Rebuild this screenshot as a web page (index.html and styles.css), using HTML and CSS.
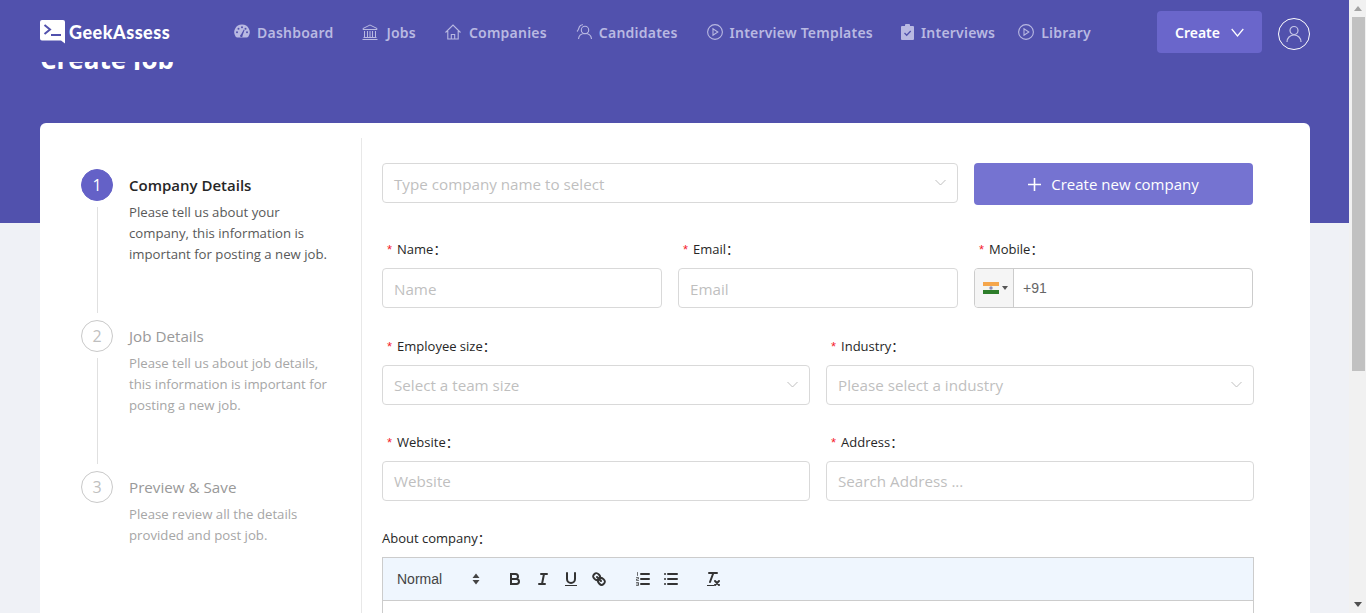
FILE: index.html
```html
<!DOCTYPE html>
<html lang="en">
<head>
    <meta charset="UTF-8">
    <meta name="viewport" content="width=device-width, initial-scale=1.0">
    <title>Create Job - GeekAssess</title>
    <link rel="stylesheet" href="styles.css">
</head>
<body>
    <div class="window">
        <div class="page">
            <header class="topbar">
                <a class="logo">
                    <svg class="logo-mark" width="25" height="24" viewBox="0 0 25 24">
                        <path d="M2 0h21a2 2 0 0 1 2 2v21.500l-4-3H2a2 2 0 0 1-2-2V2a2 2 0 0 1 2-2z" fill="#fff"/>
                        <path d="M4.500 5l5.500 4.500-5.500 4.500" fill="none" stroke="#5151ad" stroke-width="2"/>
                        <path d="M11 15h10" stroke="#5151ad" stroke-width="2"/>
                    </svg>
                    <span class="logo-text">GeekAssess</span>
                </a>
                <nav class="nav">
                    <a class="nav-item">
                        <svg width="16" height="16" viewBox="0 0 16 16"><path d="M8 .5a7.700 7.700 0 0 0-6.300 12.200c.4.600.9.800 1.500.8h9.600c.6 0 1.100-.2 1.500-.8A7.700 7.700 0 0 0 8 .5z" fill="#b9b9e2"/><g fill="#5151ad"><circle cx="8" cy="3.200" r="1"/><circle cx="4.500" cy="4.700" r="1"/><circle cx="11.500" cy="4.700" r="1"/><circle cx="3" cy="8.200" r="1"/><circle cx="13" cy="8.200" r="1"/><path d="M7 10.500l2.800-5 .8.400-2 5.300a1.300 1.300 0 1 1-1.600-.7z"/></g></svg>
                        Dashboard
                    </a>
                    <a class="nav-item nav-item-wide">
                        <svg width="16" height="16" viewBox="0 0 16 16" fill="none" stroke="#b9b9e2" stroke-width="1"><path d="M8 1L1 4.500v1h14v-1zM2.500 7v6M5.500 7v6M8 7v6M10.500 7v6M13.500 7v6M1.500 13.500h13M.5 15.500h15"/></svg>
                        Jobs
                    </a>
                    <a class="nav-item nav-item-wide">
                        <svg width="16" height="16" viewBox="0 0 16 16" fill="none" stroke="#b9b9e2" stroke-width="1.100"><path d="M.5 8.500L8 1l7.500 7.500M2.800 7v8h10.400V7M6.300 15v-4.500h3.400V15"/></svg>
                        Companies
                    </a>
                    <a class="nav-item">
                        <svg width="16" height="16" viewBox="0 0 16 16" fill="none" stroke="#b9b9e2" stroke-width="1.100"><circle cx="9" cy="6" r="3.700"/><path d="M2.500 15c.3-3.500 3-5.500 6.500-5.500s6.200 2 6.500 5.500M1 7.500C2.500 6 2.800 4.500 3.300 3 3.800 1.500 5 .7 7 .8"/></svg>
                        Candidates
                    </a>
                    <a class="nav-item">
                        <svg width="16" height="16" viewBox="0 0 16 16" fill="none" stroke="#b9b9e2" stroke-width="1.100"><circle cx="8" cy="8" r="7.400"/><path d="M6 4.800v6.400L10.800 8z"/></svg>
                        Interview Templates
                    </a>
                    <a class="nav-item nav-item-small">
                        <svg width="13" height="16" viewBox="0 0 13 16"><path d="M1 2h3V1a1 1 0 0 1 1-1h3a1 1 0 0 1 1 1v1h3a1 1 0 0 1 1 1v12a1 1 0 0 1-1 1H1a1 1 0 0 1-1-1V3a1 1 0 0 1 1-1z" fill="#b9b9e2"/><path d="M3.500 9l2.200 2.200 4-4.200" fill="none" stroke="#5151ad" stroke-width="1.300"/></svg>
                        Interviews
                    </a>
                    <a class="nav-item nav-item-last">
                        <svg width="16" height="16" viewBox="0 0 16 16" fill="none" stroke="#b9b9e2" stroke-width="1.100"><circle cx="8" cy="8" r="7.400"/><path d="M6 4.800v6.400L10.800 8z"/></svg>
                        Library
                    </a>
                </nav>
                <button class="create-btn">
                    Create
                    <svg width="13" height="9" viewBox="0 0 13 9" fill="none" stroke="#fff" stroke-width="1.200"><path d="M.7 1l5.800 7 5.800-7"/></svg>
                </button>
                <span class="avatar">
                    <svg width="18" height="18" viewBox="0 0 18 18" fill="none" stroke="#c6c6e8" stroke-width="1.200"><circle cx="9" cy="5.500" r="4"/><path d="M2 17c0-4 3-7 7-7s7 3 7 7"/></svg>
                </span>
            </header>

            <div class="title-clip"><h1 class="page-title">Create Job</h1></div>

            <main class="card">
                <aside class="steps">
                    <div class="step step-active">
                        <span class="step-num">1</span>
                        <div class="step-body">
                            <h3>Company Details</h3>
                            <p>Please tell us about your company, this information is important for posting a new job.</p>
                        </div>
                    </div>
                    <div class="step">
                        <span class="step-num">2</span>
                        <div class="step-body">
                            <h3>Job Details</h3>
                            <p>Please tell us about job details, this information is important for posting a new job.</p>
                        </div>
                    </div>
                    <div class="step step-last">
                        <span class="step-num">3</span>
                        <div class="step-body">
                            <h3>Preview &amp; Save</h3>
                            <p>Please review all the details provided and post job.</p>
                        </div>
                    </div>
                </aside>

                <form class="form">
                    <div class="row row-search">
                        <div class="select select-wide">
                            <span>Type company name to select</span>
                            <svg class="chevron" width="11" height="7" viewBox="0 0 11 7"><path d="M.5 1l5 5 5-5"/></svg>
                        </div>
                        <button type="button" class="new-company">
                            <svg width="13" height="13" viewBox="0 0 13 13"><path d="M6.500 0v13M0 6.500h13" stroke="#fff" stroke-width="1.600"/></svg>
                            Create new company
                        </button>
                    </div>

                    <div class="row row-three">
                        <div class="field">
                            <label class="req">Name：</label>
                            <div class="input">Name</div>
                        </div>
                        <div class="field">
                            <label class="req">Email：</label>
                            <div class="input">Email</div>
                        </div>
                        <div class="field">
                            <label class="req">Mobile：</label>
                            <div class="phone">
                                <span class="flag-box">
                                    <svg width="16" height="12" viewBox="0 0 16 12"><rect width="16" height="4" fill="#f5a64a"/><rect y="4" width="16" height="4" fill="#f4f4ee"/><rect y="8" width="16" height="4" fill="#2d7d2a"/><circle cx="8" cy="6" r="1.700" fill="#8d8db8"/></svg>
                                    <i class="caret"></i>
                                </span>
                                <span class="phone-code">+91</span>
                            </div>
                        </div>
                    </div>

                    <div class="row row-two">
                        <div class="field">
                            <label class="req">Employee size：</label>
                            <div class="select">
                                <span>Select a team size</span>
                                <svg class="chevron" width="11" height="7" viewBox="0 0 11 7"><path d="M.5 1l5 5 5-5"/></svg>
                            </div>
                        </div>
                        <div class="field">
                            <label class="req">Industry：</label>
                            <div class="select">
                                <span>Please select a industry</span>
                                <svg class="chevron" width="11" height="7" viewBox="0 0 11 7"><path d="M.5 1l5 5 5-5"/></svg>
                            </div>
                        </div>
                    </div>

                    <div class="row row-two">
                        <div class="field">
                            <label class="req">Website：</label>
                            <div class="input">Website</div>
                        </div>
                        <div class="field">
                            <label class="req">Address：</label>
                            <div class="input">Search Address ...</div>
                        </div>
                    </div>

                    <div class="field">
                        <label>About company：</label>
                        <div class="editor">
                            <div class="toolbar">
                                <span class="tb-select">Normal
                                    <svg width="8" height="12" viewBox="0 0 8 12" fill="#444"><path d="M4 .5L7.500 5H.5zM4 11.500L.5 7h7z"/></svg>
                                </span>
                                <span class="tb-group">
                                    <svg class="tb-icon" width="18" height="18" viewBox="0 0 18 18"><path d="M5 4h4.500a2.500 2.500 0 0 1 0 5H5zM5 9h5.500a2.500 2.500 0 0 1 0 5H5z"/></svg>
                                    <svg class="tb-icon" width="18" height="18" viewBox="0 0 18 18"><path d="M7 4h6M5 14h6M8 14l2-10"/></svg>
                                    <svg class="tb-icon" width="18" height="18" viewBox="0 0 18 18"><path d="M5 3v6a4 4 0 0 0 8 0V3"/><rect class="tb-fill" x="3" y="15" width="12" height="1"/></svg>
                                    <svg class="tb-icon" width="18" height="18" viewBox="0 0 18 18"><path d="M7 7l4 4M8.900 4.577a3.476 3.476 0 0 1 .36 4.679A3.476 3.476 0 0 1 4.577 8.900C3.185 7.500 2.035 6.400 4.217 4.217S7.500 3.185 8.900 4.577zM13.423 9.100a3.476 3.476 0 0 0-4.679-.36 3.476 3.476 0 0 0 .36 4.679c1.392 1.392 2.500 2.542 4.679.36s1.032-3.279-.36-4.679z"/></svg>
                                </span>
                                <span class="tb-group tb-group-lists">
                                    <svg class="tb-icon" width="18" height="18" viewBox="0 0 18 18"><path d="M7 4h8M7 9h8M7 14h8"/><path class="tb-thin" d="M3.500 2.500v3M2.500 7.500h2v1.500h-2v1.500h2M2.500 12.500h2v3h-2M2.500 14h2"/></svg>
                                    <svg class="tb-icon" width="18" height="18" viewBox="0 0 18 18"><path d="M6 4h9M6 9h9M6 14h9M3 4h.01M3 9h.01M3 14h.01"/></svg>
                                </span>
                                <span class="tb-group">
                                    <svg class="tb-icon" width="18" height="18" viewBox="0 0 18 18"><path d="M5 3h8M6 12L9.350 3M11 11l4 4M15 11l-4 4"/><rect class="tb-fill" x="3" y="15" width="7" height="1"/></svg>
                                </span>
                            </div>
                            <div class="editor-body"></div>
                        </div>
                    </div>
                </form>
            </main>
        </div>

        <div class="scrollbar">
            <i class="arrow-up"></i>
            <div class="thumb"></div>
            <i class="arrow-down"></i>
        </div>
    </div>
</body>
</html>
```

FILE: styles.css
```css
* {
    box-sizing: border-box;
}
html, body {
    margin: 0;
    height: 100%;
    overflow: hidden;
}
body {
    font-family: "Open Sans", "Noto Sans", "Noto Sans CJK SC", Arial, sans-serif;
    color: #262626;
}
.window {
    display: flex;
    height: 613px;
}
.page {
    flex: 1;
    height: 613px;
    overflow: hidden;
    background: linear-gradient(#5151ad 223px, #eff1f6 223px);
}

/* top bar */
.topbar {
    display: flex;
    align-items: center;
    height: 62px;
    padding: 0 39px 0 40px;
}
.logo {
    display: flex;
    align-items: center;
    gap: 4px;
    width: 194px;
    margin-top: 1px;
}
.logo-text {
    font-family: Lato, sans-serif;
    font-weight: 900;
    font-size: 18px;
    letter-spacing: 0.5px;
    color: #fff;
}
.nav {
    display: flex;
    align-items: center;
    gap: 29px;
    flex: 1;
    margin-top: 2px;
}
.nav-item {
    display: flex;
    align-items: center;
    gap: 7px;
    font-family: "Noto Sans", sans-serif;
    font-size: 14px;
    font-weight: 600;
    letter-spacing: 0.22px;
    color: #b9b9e2;
    white-space: nowrap;
}
.nav-item-wide {
    gap: 8px;
}
.nav-item-small {
    margin-left: -1px;
}
.nav-item-last {
    margin-left: -6px;
}
.create-btn {
    display: flex;
    align-items: center;
    justify-content: center;
    gap: 11px;
    width: 105px;
    height: 42px;
    margin-top: 2px;
    background: #6a66cb;
    border: none;
    border-radius: 4px;
    color: #fff;
    font-family: "Noto Sans", sans-serif;
    font-size: 14px;
    font-weight: 600;
}
.avatar {
    display: flex;
    align-items: center;
    justify-content: center;
    width: 32px;
    height: 32px;
    margin-left: 16px;
    margin-top: 6px;
    border: 1px solid #fff;
    border-radius: 50%;
}

/* title is mostly scrolled under the top bar */
.title-clip {
    height: 8px;
    padding-left: 40px;
    overflow: hidden;
}
.page-title {
    margin: -19px 0 0;
    font-size: 26px;
    line-height: 32px;
    font-weight: 700;
    color: #fff;
}

/* card */
.card {
    display: flex;
    margin: 53px 39px 0 40px;
    padding-top: 15px;
    height: 600px;
    background: #fff;
    border-radius: 6px;
}
.steps {
    width: 322px;
    padding: 31px 0 0 41px;
    border-right: 1px solid #e8e8e8;
}
.step {
    position: relative;
    display: flex;
    gap: 16px;
    height: 151px;
}
.step::after {
    content: "";
    position: absolute;
    left: 16px;
    top: 38px;
    bottom: 7px;
    width: 1px;
    background: #e0e0e0;
}
.step-last::after {
    display: none;
}
.step-num {
    flex: none;
    display: flex;
    align-items: center;
    justify-content: center;
    width: 32px;
    height: 32px;
    border: 1px solid #c9c9c9;
    border-radius: 50%;
    font-size: 16px;
    color: #bfbfbf;
}
.step-active .step-num {
    background: #6461c7;
    border-color: #6461c7;
    color: #fff;
}
.step-body {
    width: 206px;
}
.step-body h3 {
    margin: 5px 0 6px;
    font-size: 15.200px;
    line-height: 22px;
    font-weight: 400;
    color: #999;
}
.step-body p {
    margin: 0;
    font-size: 13.200px;
    line-height: 21px;
    color: #a6a6a6;
}
.step-active h3 {
    font-size: 15px;
    font-weight: 600;
    color: #262626;
}
.step-active p {
    color: #595959;
}

/* form */
.form {
    width: 892px;
    padding: 25px 0 0 20px;
}
.row {
    display: grid;
    gap: 16px;
    margin-bottom: 26px;
}
.row-search {
    grid-template-columns: 576px 279px;
    align-items: start;
    margin-bottom: 33px;
}
.row-three {
    grid-template-columns: 280px 280px 279px;
    margin-bottom: 27px;
}
.row-two {
    grid-template-columns: 428px 428px;
}
.field label {
    display: block;
    height: 22px;
    margin-bottom: 8px;
    font-size: 13px;
    line-height: 22px;
    color: #262626;
}
.req::before {
    content: "*";
    margin: 0 5px 0 5px;
    color: #f5222d;
    font-family: SimSun, "Liberation Sans", sans-serif;
}
.input, .select {
    display: flex;
    align-items: center;
    justify-content: space-between;
    height: 40px;
    padding: 1px 11px 0;
    background: #fff;
    border: 1px solid #d9d9d9;
    border-radius: 4px;
    font-size: 15.200px;
    color: #bfbfbf;
    white-space: nowrap;
}
.row-two .input, .row-two .select {
    padding-top: 0;
}
.chevron {
    margin-top: -2px;
    fill: none;
    stroke: #bfbfbf;
    stroke-width: 1;
}
.new-company {
    display: flex;
    align-items: center;
    justify-content: center;
    gap: 10px;
    height: 42px;
    background: #7573d1;
    border: none;
    border-radius: 4px;
    color: #fff;
    font-family: "Open Sans", sans-serif;
    font-size: 15px;
}
.phone {
    display: flex;
    align-items: center;
    height: 40px;
    border: 1px solid #ccc;
    border-radius: 4px;
    overflow: hidden;
}
.flag-box {
    display: flex;
    align-items: center;
    gap: 3px;
    width: 39px;
    height: 100%;
    padding-left: 8px;
    background: #f5f5f5;
    border-right: 1px solid #ccc;
}
.caret {
    width: 0;
    height: 0;
    border-left: 3px solid transparent;
    border-right: 3px solid transparent;
    border-top: 4px solid #555;
}
.phone-code {
    padding-left: 9px;
    font-family: "Liberation Sans", Arial, sans-serif;
    font-size: 14px;
    color: #666;
}

/* editor */
.editor {
    border: 1px solid #ccc;
    border-bottom: none;
}
.toolbar {
    display: flex;
    align-items: center;
    height: 43px;
    padding-left: 14px;
    background: #eff6fe;
    border-bottom: 1px solid #ccc;
}
.tb-select {
    display: flex;
    align-items: center;
    justify-content: space-between;
    width: 83px;
    margin-right: 26px;
    font-family: "Liberation Sans", Arial, sans-serif;
    font-size: 14px;
    color: #444;
}
.tb-group {
    display: flex;
    gap: 10px;
    margin-right: 26px;
}
.tb-group-lists {
    margin-right: 24px;
}
.tb-icon {
    fill: none;
    stroke: #333;
    stroke-width: 2;
    stroke-linecap: round;
}
.tb-thin {
    stroke-width: 0.700;
}
.tb-fill {
    fill: #333;
    stroke: none;
}
.editor-body {
    height: 60px;
}

/* scrollbar */
.scrollbar {
    display: flex;
    flex-direction: column;
    align-items: center;
    width: 17px;
    height: 613px;
    background: #f1f1f1;
}
.arrow-up, .arrow-down {
    flex: none;
    width: 0;
    height: 0;
    border-left: 4px solid transparent;
    border-right: 4px solid transparent;
}
.arrow-up {
    margin: 6px 0 6px;
    border-bottom: 5px solid #a3a3a3;
}
.arrow-down {
    margin-top: auto;
    margin-bottom: 6px;
    border-top: 5px solid #505050;
}
.thumb {
    width: 13px;
    height: 354px;
    margin-left: 1px;
    background: #c1c1c1;
}
```
